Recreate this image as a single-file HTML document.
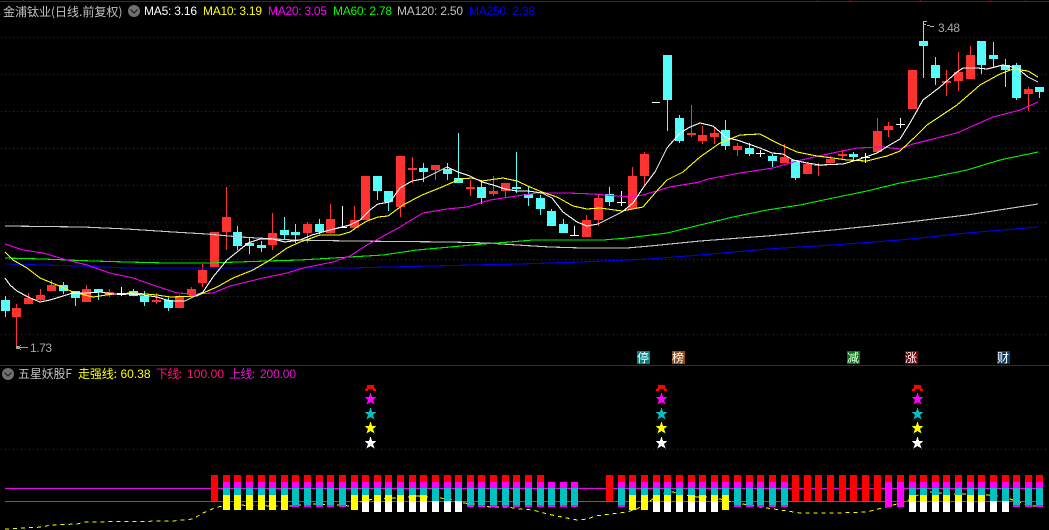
<!DOCTYPE html>
<html><head><meta charset="utf-8"><style>
html,body{margin:0;padding:0;background:#000;width:1049px;height:530px;overflow:hidden}
svg{display:block;position:absolute;left:0;top:0}
text{font-family:"Liberation Sans","WenQuanYi Zen Hei","Noto Sans CJK SC",sans-serif;font-size:12px;letter-spacing:0}
.c{font-family:"WenQuanYi Zen Hei","Noto Sans CJK SC",sans-serif;letter-spacing:0}
polyline{fill:none;stroke-width:1.1}
</style></head><body>
<svg width="1049" height="530" viewBox="0 0 1049 530" shape-rendering="crispEdges">
<defs>
<g id="A"><rect y="475" width="7" height="7" fill="#f00"/><rect y="482" width="7" height="6" fill="#f0f"/><rect y="488" width="7" height="7" fill="#00c0c0"/><rect y="495" width="7" height="15" fill="#ff0"/></g>
<g id="B"><rect y="475" width="7" height="7" fill="#f00"/><rect y="482" width="7" height="6" fill="#f0f"/><rect y="488" width="7" height="7" fill="#00c0c0"/><rect y="495" width="7" height="6" fill="#ff0"/><rect y="501" width="7" height="11" fill="#fff"/></g>
<g id="G"><rect y="475" width="7" height="7" fill="#f00"/><rect y="482" width="7" height="6" fill="#f0f"/><rect y="488" width="7" height="13" fill="#00c0c0"/><rect y="501" width="7" height="11" fill="#fff"/></g>
<g id="C"><rect y="475" width="7" height="7" fill="#f00"/><rect y="482" width="7" height="6" fill="#f0f"/><rect y="488" width="7" height="17" fill="#00c0c0"/><rect y="505" width="7" height="2" fill="#f0f"/></g>
<g id="E"><rect y="482" width="7" height="6" fill="#f0f"/><rect y="488" width="7" height="17" fill="#00c0c0"/><rect y="505" width="7" height="2" fill="#f0f"/></g>
<g id="D"><rect y="475" width="7" height="26" fill="#f00"/></g>
<g id="F"><rect y="475" width="7" height="7" fill="#f00"/><rect y="482" width="7" height="25" fill="#f0f"/></g>
<g id="S">
<path d="M-3 385h7v3h-7zM-4 388h9v1h-9zM-5 389h3v2h-3zM3 389h3v2h-3z" fill="#f00"/>
<polygon transform="translate(.5 399)" points="0,-6.5 1.6,-2 6,-2 2.6,.8 4,5.5 0,3 -4,5.5 -2.6,.8 -6,-2 -1.6,-2" fill="#f0f"/>
<polygon transform="translate(.5 414)" points="0,-6.5 1.6,-2 6,-2 2.6,.8 4,5.5 0,3 -4,5.5 -2.6,.8 -6,-2 -1.6,-2" fill="#00c0c0"/>
<polygon transform="translate(.5 428)" points="0,-6.5 1.6,-2 6,-2 2.6,.8 4,5.5 0,3 -4,5.5 -2.6,.8 -6,-2 -1.6,-2" fill="#ff0"/>
<polygon transform="translate(.5 443)" points="0,-6.5 1.6,-2 6,-2 2.6,.8 4,5.5 0,3 -4,5.5 -2.6,.8 -6,-2 -1.6,-2" fill="#fff"/>
</g>
</defs>

<!-- frame -->
<rect x="0" y="1" width="1049" height="1" fill="#a00000"/>
<path d="M23 0h1v1h-1zM817 0h1v1h-1zM850 0h1v1h-1zM920 0h1v1h-1zM990 0h1v1h-1zM1025 0h1v1h-1z" fill="#a00000"/>
<rect x="0" y="365" width="1049" height="1" fill="#a00000"/>

<!-- grid -->
<g stroke="#8c0a0a" stroke-width="1" stroke-dasharray="1 3" fill="none">
<path d="M1 37.5H1049M1 74.5H1049M1 111.5H1049M1 148.5H1049M1 185.5H1049M1 222.5H1049M1 259.5H1049M1 296.5H1049M1 334.5H1049M1 449.5H1049"/>
</g>

<!-- candles -->
<path fill="#ff3232" d="M12 308h9V317h-9zM16 304h1V347h-1zM24 298h9V304h-9zM28 293h1V304h-1zM36 295h9V300h-9zM40 289h1V301h-1zM47 285h9V291h-9zM51 280h1V291h-1zM82 289h9V302h-9zM86 285h1V302h-1zM105 292h9V295h-9zM109 289h1V297h-1zM152 300h9V302h-9zM156 293h1V304h-1zM175 296h9V308h-9zM179 295h1V308h-1zM187 289h9V295h-9zM191 287h1V295h-1zM198 270h9V283h-9zM202 264h1V287h-1zM210 232h9V267h-9zM222 217h9V232h-9zM226 187h1V250h-1zM268 233h9V245h-9zM272 213h1V250h-1zM303 224h9V233h-9zM307 222h1V243h-1zM326 219h9V233h-9zM330 204h1V234h-1zM350 220h9V228h-9zM354 206h1V230h-1zM361 176h9V220h-9zM396 156h9V207h-9zM400 156h1V217h-1zM408 168h9V170h-9zM412 157h1V183h-1zM431 165h9V170h-9zM435 165h1V180h-1zM466 187h9V189h-9zM470 180h1V196h-1zM489 191h9V194h-9zM493 176h1V196h-1zM501 183h9V191h-9zM505 183h1V197h-1zM582 220h9V237h-9zM586 215h1V237h-1zM594 198h9V220h-9zM598 195h1V226h-1zM628 176h9V209h-9zM632 167h1V209h-1zM640 154h9V176h-9zM644 152h1V185h-1zM687 133h9V135h-9zM691 105h1V137h-1zM698 135h9V141h-9zM702 126h1V144h-1zM710 133h9V137h-9zM714 127h1V144h-1zM733 146h9V150h-9zM737 143h1V156h-1zM780 157h9V163h-9zM784 144h1V163h-1zM803 164h9V174h-9zM807 162h1V174h-1zM814 165h9V166h-9zM818 163h1V176h-1zM826 159h9V163h-9zM830 156h1V164h-1zM838 154h9V156h-9zM842 150h1V159h-1zM873 131h9V152h-9zM877 118h1V152h-1zM884 126h9V130h-9zM888 122h1V137h-1zM908 70h9V109h-9zM942 81h9V83h-9zM946 70h1V96h-1zM954 72h9V81h-9zM958 52h1V91h-1zM966 55h9V79h-9zM970 46h1V79h-1zM1024 89h9V94h-9zM1028 87h1V111h-1z"/>
<path fill="#54fcfc" d="M1 300h9V311h-9zM5 296h1V317h-1zM59 285h9V291h-9zM63 282h1V294h-1zM71 291h9V298h-9zM75 291h1V306h-1zM94 289h9V292h-9zM98 289h1V300h-1zM129 291h9V296h-9zM133 289h1V296h-1zM140 296h9V302h-9zM144 291h1V306h-1zM164 300h9V308h-9zM168 298h1V311h-1zM233 232h9V246h-9zM237 226h1V250h-1zM245 243h9V246h-9zM249 238h1V254h-1zM257 245h9V248h-9zM261 241h1V252h-1zM280 230h9V235h-9zM284 217h1V239h-1zM291 232h9V235h-9zM295 224h1V243h-1zM315 224h9V232h-9zM319 219h1V234h-1zM373 176h9V191h-9zM377 176h1V200h-1zM384 191h9V202h-9zM388 191h1V211h-1zM419 168h9V172h-9zM423 163h1V182h-1zM443 169h9V174h-9zM447 163h1V180h-1zM454 178h9V183h-9zM458 133h1V183h-1zM477 187h9V198h-9zM481 180h1V204h-1zM512 187h9V189h-9zM516 152h1V193h-1zM524 194h9V198h-9zM528 187h1V206h-1zM536 198h9V209h-9zM540 195h1V215h-1zM547 211h9V226h-9zM551 209h1V226h-1zM559 224h9V233h-9zM563 219h1V233h-1zM605 194h9V202h-9zM609 187h1V206h-1zM663 55h9V100h-9zM667 55h1V131h-1zM675 118h9V141h-9zM679 115h1V143h-1zM721 130h9V146h-9zM725 120h1V150h-1zM745 148h9V154h-9zM749 143h1V156h-1zM768 156h9V161h-9zM772 154h1V167h-1zM791 160h9V178h-9zM795 160h1V180h-1zM849 154h9V157h-9zM853 152h1V161h-1zM919 41h9V46h-9zM923 21h1V78h-1zM931 65h9V78h-9zM935 57h1V85h-1zM977 41h9V65h-9zM981 41h1V74h-1zM989 55h9V59h-9zM993 42h1V67h-1zM1001 65h9V70h-9zM1005 59h1V87h-1zM1012 65h9V98h-9zM1016 63h1V100h-1zM1035 87h9V92h-9zM1039 87h1V98h-1z"/>
<path fill="#fff" d="M117 294h9v1h-9zM121 287h1V296h-1zM338 227h9v1h-9zM342 206h1V228h-1zM570 235h9v1h-9zM574 226h1V235h-1zM617 202h9v1h-9zM621 191h1V206h-1zM652 102h8v1h-8zM756 153h9v1h-9zM760 150h1V157h-1zM861 157h9v1h-9zM865 153h1V163h-1zM896 124h9v1h-9zM900 118h1V128h-1z"/>

<!-- MA lines -->
<polyline stroke="#0000f0" points="5,264 80,266 127,268 233,268 300,268 350,268 430,266 520,264 580,262 627,260 650,259 700,255 767,249 833,245 900,240 967,233 1038,227"/>
<polyline stroke="#c8c8c8" points="5,226 83,227 127,229 173,232 207,234 240,237 293,240 350,241 450,242 487,243 517,245 550,247 583,248 627,248 650,246 700,241 767,236 833,230 900,223 967,215 1038,204"/>
<polyline stroke="#00f000" points="5,258 43,259 93,261 127,262 167,263 210,263 267,261 300,260 350,257 383,255 417,250 450,247 483,244 510,242 533,240 603,240 627,238 667,233 700,225 733,217 767,210 800,205 833,198 867,191 900,183 933,177 967,170 1000,160 1038,152"/>
<polyline stroke="#f000f0" points="5,244 23,250 43,253 67,260 87,265 110,273 133,278 153,285 177,293 197,294 213,293 230,286 263,278 287,273 303,268 333,262 350,256 367,245 400,227 423,213 447,209 467,207 490,200 510,197 537,193 567,193 593,194 630,197 643,195 670,187 700,182 708,179 740,173 773,168 797,161 823,155 857,148 883,147 900,149 913,144 957,133 993,117 1020,110 1038,102"/>
<polyline stroke="#ffff00" points="5,252 13,260 27,268 40,278 57,285 73,292 93,297 113,294 133,293 157,295 170,297 197,296 203,293 217,287 233,278 253,270 270,260 287,248 300,242 320,235 340,235 350,232 357,227 367,221 378,217 388,216 403,205 422,195 442,187 460,179 472,178 482,181 503,178 517,181 530,187 542,192 557,197 573,206 587,209 600,208 622,211 643,207 655,193 667,180 683,172 700,157 720,143 740,135 760,134 777,143 797,152 817,156 833,158 847,160 867,161 887,156 900,151 917,135 927,125 957,105 980,85 1000,74 1013,69 1028,71 1038,77"/>
<polyline stroke="#ffffff" points="5,278 10,285 17,291 28,297 40,302 50,300 63,296 73,293 87,293 100,292 113,294 130,294 143,295 157,297 170,301 185,301 193,297 203,292 213,277 227,260 237,252 248,243 260,239 273,239 285,242 300,240 312,235 330,230 350,225 360,220 370,210 378,204 390,202 400,188 412,181 423,179 437,172 447,167 458,172 470,176 482,182 493,185 505,189 517,191 528,191 542,193 552,198 563,212 577,222 587,226 598,224 610,218 622,212 633,203 643,188 655,172 667,148 680,133 690,127 700,123 713,126 727,138 737,140 760,148 772,153 783,154 793,160 807,163 820,165 843,164 857,160 877,153 888,146 900,139 910,123 923,100 940,87 957,72 963,68 977,68 987,69 1003,65 1017,68 1028,77 1038,82"/>

<!-- extreme labels -->
<path fill="#b0b0b0" d="M923 21h4v1h-4zM923 24h3v1h-3zM927 25h3v1h-3zM930 26h4v1h-4z"/>
<text x="938" y="32" fill="#a8a8a8" textLength="22">3.48</text>
<path fill="#a0a0a0" d="M16 346h3v3h-3zM19 347h9v1h-9zM19 346h1v1h-1zM20 345h1v1h-1zM19 348h1v1h-1zM20 349h1v1h-1z"/>
<text x="30" y="352" fill="#a8a8a8" textLength="22">1.73</text>

<!-- legend -->
<text class="c" x="3" y="16" fill="#c0c0c0">金浦钛业(日线.前复权)</text>
<circle cx="134" cy="11" r="6" fill="#707070" shape-rendering="auto"/>
<path d="M130.5 9.5l3.5 3.5 3.5-3.5" stroke="#1c1c1c" stroke-width="1.2" fill="none" shape-rendering="auto"/>
<text x="144" y="15" fill="#fff" textLength="53">MA5: 3.16</text>
<text x="203" y="15" fill="#ff0" textLength="59">MA10: 3.19</text>
<text x="268" y="15" fill="#f0f" textLength="59">MA20: 3.05</text>
<text x="333" y="15" fill="#0f0" textLength="59">MA60: 2.78</text>
<text x="397" y="15" fill="#c0c0c0" textLength="66">MA120: 2.50</text>
<text x="469" y="15" fill="#0000ff" textLength="66">MA250: 2.38</text>

<!-- event badges -->
<rect x="637" y="351" width="13" height="13" fill="#008080"/><text class="c" x="637" y="362" fill="#fff">停</text>
<rect x="672" y="351" width="13" height="13" fill="#8b4a14"/><text class="c" x="672" y="362" fill="#fff">榜</text>
<rect x="847" y="351" width="13" height="13" fill="#007a10"/><text class="c" x="847" y="362" fill="#fff">减</text>
<rect x="905" y="351" width="13" height="13" fill="#800000"/><text class="c" x="905" y="362" fill="#fff">涨</text>
<rect x="997" y="351" width="13" height="13" fill="#0a3a66"/><text class="c" x="997" y="362" fill="#fff">财</text>

<!-- lower legend -->
<circle cx="8" cy="374" r="6" fill="#707070" shape-rendering="auto"/>
<path d="M4.5 372.5l3.5 3.5 3.5-3.5" stroke="#1c1c1c" stroke-width="1.2" fill="none" shape-rendering="auto"/>
<text class="c" x="18" y="378" fill="#c0c0c0" textLength="54">五星妖股F</text>
<text class="c" x="78" y="378" fill="#ff0" textLength="39">走强线:</text><text x="120.5" y="378" fill="#ff0" textLength="30">60.38</text>
<text class="c" x="156" y="378" fill="#ff1478" textLength="26">下线:</text><text x="187" y="378" fill="#ff1478" textLength="37">100.00</text>
<text class="c" x="229" y="378" fill="#e614d2" textLength="26">上线:</text><text x="260" y="378" fill="#e614d2" textLength="36">200.00</text>

<!-- stars -->
<use href="#S" x="370"/><use href="#S" x="661"/><use href="#S" x="917"/>

<!-- lower lines -->
<rect x="5" y="488" width="1034" height="1" fill="#f000f0"/>
<rect x="5" y="501" width="1034" height="1" fill="#f01478"/>
<polyline stroke="#ffff00" stroke-width="1" style="stroke-width:1" stroke-dasharray="4 4" points="5,529 43,527 50,525 77,524 85,522 173,521 193,519 203,513 217,507 233,505 277,506 290,506 300,505 313,504 337,505 350,506 360,502 373,499 397,498 417,496 450,499 463,503 475,504 490,507 507,507 520,509 533,510 547,514 557,516 577,520 588,519 595,516 627,512 637,509 647,503 660,494 673,492 685,495 697,497 707,497 720,499 732,502 743,504 767,508 787,511 800,513 833,513 867,512 882,508 893,505 905,502 918,495 930,492 953,494 977,494 997,496 1010,499 1022,503 1033,506 1043,506"/>

<!-- stacked bars -->
<use href="#D" x="211"/><use href="#D" x="606"/><use href="#D" x="792"/><use href="#D" x="804"/><use href="#D" x="815"/><use href="#D" x="827"/><use href="#D" x="839"/><use href="#D" x="850"/><use href="#D" x="862"/><use href="#D" x="874"/>
<use href="#A" x="223"/><use href="#A" x="234"/><use href="#A" x="246"/><use href="#A" x="258"/><use href="#A" x="269"/><use href="#A" x="281"/><use href="#A" x="351"/><use href="#A" x="629"/><use href="#A" x="641"/><use href="#A" x="722"/>
<use href="#B" x="362"/><use href="#B" x="374"/><use href="#B" x="385"/><use href="#B" x="397"/><use href="#B" x="409"/><use href="#B" x="420"/><use href="#B" x="653"/><use href="#B" x="664"/><use href="#B" x="676"/><use href="#B" x="688"/><use href="#B" x="699"/><use href="#B" x="711"/><use href="#B" x="909"/><use href="#B" x="920"/><use href="#B" x="932"/><use href="#B" x="943"/><use href="#B" x="955"/><use href="#B" x="967"/><use href="#B" x="978"/>
<use href="#G" x="432"/><use href="#G" x="444"/><use href="#G" x="455"/><use href="#G" x="990"/><use href="#G" x="1002"/>
<use href="#C" x="292"/><use href="#C" x="304"/><use href="#C" x="316"/><use href="#C" x="327"/><use href="#C" x="339"/><use href="#C" x="467"/><use href="#C" x="478"/><use href="#C" x="490"/><use href="#C" x="502"/><use href="#C" x="513"/><use href="#C" x="525"/><use href="#C" x="537"/><use href="#C" x="618"/><use href="#C" x="734"/><use href="#C" x="746"/><use href="#C" x="757"/><use href="#C" x="769"/><use href="#C" x="781"/><use href="#C" x="1013"/><use href="#C" x="1025"/><use href="#C" x="1036"/>
<use href="#E" x="548"/><use href="#E" x="560"/><use href="#E" x="571"/>
<use href="#F" x="885"/><use href="#F" x="897"/>
</svg>
</body></html>
